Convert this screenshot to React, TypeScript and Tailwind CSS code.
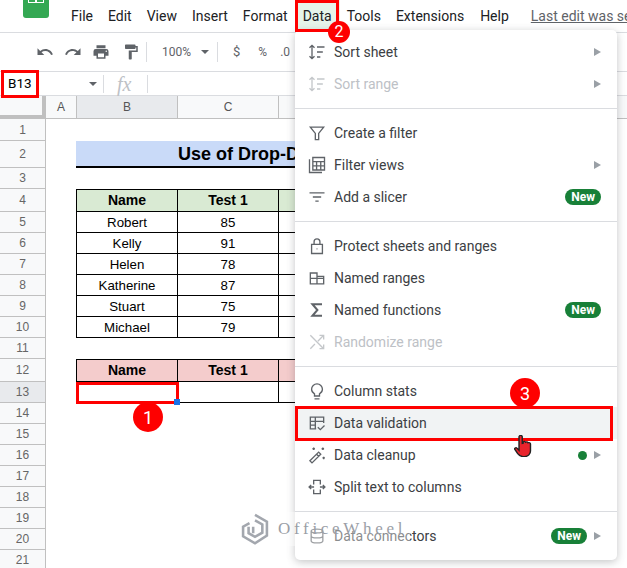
const font = "[font-family:Roboto,sans-serif]";

const rows = [
  { n: 1, h: "h-[22px]" },
  { n: 2, h: "h-[27px]" },
  { n: 3, h: "h-[21px]" },
  { n: 4, h: "h-[23px]" },
  { n: 5, h: "h-[21px]" },
  { n: 6, h: "h-[21px]" },
  { n: 7, h: "h-[21px]" },
  { n: 8, h: "h-[21px]" },
  { n: 9, h: "h-[21px]" },
  { n: 10, h: "h-[21px]" },
  { n: 11, h: "h-[21px]" },
  { n: 12, h: "h-[23px]" },
  { n: 13, h: "h-[21px]" },
  { n: 14, h: "h-[21px]" },
  { n: 15, h: "h-[21px]" },
  { n: 16, h: "h-[21px]" },
  { n: 17, h: "h-[21px]" },
  { n: 18, h: "h-[21px]" },
  { n: 19, h: "h-[21px]" },
  { n: 20, h: "h-[21px]" },
  { n: 21, h: "h-[21px]" },
];

const people: Record<number, [string, string]> = {
  5: ["Robert", "85"],
  6: ["Kelly", "91"],
  7: ["Helen", "78"],
  8: ["Katherine", "87"],
  9: ["Stuart", "75"],
  10: ["Michael", "79"],
};

function Cell({ className = "", children }: { className?: string; children?: React.ReactNode }) {
  return (
    <div className={`flex items-center justify-center border-r border-b border-black ${className}`}>
      {children}
    </div>
  );
}

function RowCells({ n }: { n: number }) {
  if (n === 2) {
    return (
      <div className="ml-[30px] flex w-[420px] items-center border-b-[2px] border-black bg-[#c9daf8] pt-[1px] pl-[102px] text-[18px] font-bold whitespace-nowrap text-black">
        Use of Drop-Down List
      </div>
    );
  }
  if (n === 4 || n === 12) {
    const bg = n === 4 ? "bg-[#d9ead3]" : "bg-[#f4cccc]";
    return (
      <div className="ml-[30px] flex border-t border-l border-black text-[14px] font-bold text-black">
        <Cell className={`w-[101px] ${bg}`}>Name</Cell>
        <Cell className={`w-[101px] ${bg}`}>Test 1</Cell>
        <Cell className={`w-[101px] ${bg}`} />
      </div>
    );
  }
  if (n === 13) {
    return (
      <div className="ml-[30px] flex border-l border-black text-[13px]">
        <Cell className="w-[101px]" />
        <Cell className="w-[101px]" />
        <Cell className="w-[101px]" />
      </div>
    );
  }
  const p = people[n];
  if (p) {
    return (
      <div className="ml-[30px] flex border-l border-black text-[13.3px] text-black">
        <Cell className="w-[101px] pt-[1px]">{p[0]}</Cell>
        <Cell className="w-[101px] pt-[1px]">{p[1]}</Cell>
        <Cell className="w-[101px]" />
      </div>
    );
  }
  return null;
}

function Sheet() {
  return (
    <div className="[font-family:'Liberation_Sans',Arial,sans-serif]">
      <div className="flex h-[23px] border-b border-[#c0c0c0] bg-white text-[12px] text-[#555]">
        <div className="w-[46px] border-r-[4px] border-b-[3px] border-[#c0c0c0] bg-[#f8f9fa]" />
        <div className="flex w-[31px] items-center justify-center border-r border-[#c0c0c0] bg-[#f8f9fa]">A</div>
        <div className="flex w-[101px] items-center justify-center border-r border-[#c0c0c0] bg-[#e8eaed]">B</div>
        <div className="flex w-[101px] items-center justify-center border-r border-[#c0c0c0] bg-[#f8f9fa]">C</div>
        <div className="flex-1 bg-[#f8f9fa]" />
      </div>
      {rows.map((r) => (
        <div key={r.n} className={`flex ${r.h}`}>
          <div
            className={`flex w-[46px] shrink-0 items-center justify-center border-r border-b border-[#c0c0c0] text-[12px] text-[#666] ${
              r.n === 13 ? "bg-[#e8eaed]" : "bg-[#f8f9fa]"
            }`}
          >
            {r.n}
          </div>
          <RowCells n={r.n} />
        </div>
      ))}
    </div>
  );
}

function Toolbar() {
  return (
    <div className="flex h-[39px] items-center border-b border-[#dadce0] pl-[36px] text-[#5f6368]">
      <svg viewBox="0 0 24 24" className="h-[18px] w-[18px]" fill="currentColor">
        <path d="M12.5 8c-2.65 0-5.05 1-6.9 2.6L2 7v9h9l-3.62-3.62A8 8 0 0 1 12.5 10.5c3.54 0 6.55 2.31 7.6 5.5l2.37-.78C21.08 11.03 17.15 8 12.5 8z" />
      </svg>
      <svg viewBox="0 0 24 24" className="ml-[10px] h-[18px] w-[18px]" fill="currentColor">
        <path d="M18.4 10.6C16.55 9 14.15 8 11.5 8c-4.65 0-8.58 3.03-9.96 7.22L3.9 16a8 8 0 0 1 7.6-5.5c1.95 0 3.73.72 5.12 1.88L13 16h9V7z" />
      </svg>
      <svg viewBox="0 0 24 24" className="ml-[10px] h-[18px] w-[18px]" fill="currentColor">
        <path d="M19 8H5a3 3 0 0 0-3 3v6h4v4h12v-4h4v-6a3 3 0 0 0-3-3zm-3 11H8v-5h8v5zm3-7a1 1 0 1 1 0-2 1 1 0 0 1 0 2zM18 3H6v4h12V3z" />
      </svg>
      <svg viewBox="0 0 24 24" className="ml-[12px] h-[18px] w-[18px]" fill="currentColor">
        <path d="M18 4V3a1 1 0 0 0-1-1H5a1 1 0 0 0-1 1v4a1 1 0 0 0 1 1h12a1 1 0 0 0 1-1V6h1v4H9v11a1 1 0 0 0 1 1h2a1 1 0 0 0 1-1v-9h8V4h-3z" />
      </svg>
      <div className="ml-[6px] h-[20px] w-px bg-[#dadce0]" />
      <span className={`ml-[15px] text-[12px] ${font}`}>100%</span>
      <span className="ml-[10px] h-0 w-0 border-x-[4px] border-t-[4px] border-x-transparent border-t-[#5f6368]" />
      <div className="ml-[8px] h-[20px] w-px bg-[#dadce0]" />
      <span className={`ml-[15px] text-[13px] ${font}`}>$</span>
      <span className={`ml-[18px] text-[12px] ${font}`}>%</span>
      <span className={`ml-[13px] text-[12px] ${font}`}>.0</span>
    </div>
  );
}

function FormulaBar() {
  return (
    <div className="flex h-[24px] items-center border-b border-[#dadce0]">
      <div className={`w-[89px] pl-[8px] text-[13.5px] text-black ${font}`}>B13</div>
      <span className="h-0 w-0 border-x-[4px] border-t-[4px] border-x-transparent border-t-[#5f6368]" />
      <div className="ml-[6px] h-[18px] w-px bg-[#dadce0]" />
      <span className="ml-[13px] w-[20px] [font-family:'Liberation_Serif',serif] text-[20px] leading-[20px] text-[#bdc1c6] italic">
        fx
      </span>
      <div className="ml-[10px] h-[18px] w-px bg-[#dadce0]" />
    </div>
  );
}

function MenuBar() {
  return (
    <div className="flex h-[33px] border-b border-[#dadce0]">
      <div className="relative w-[71px] shrink-0">
        <div className="absolute top-[-14px] left-[23px] flex h-[32px] w-[26px] items-center justify-center rounded-[3px] bg-[#34a853]">
          <div className="mt-[-10px] grid h-[11px] w-[16px] grid-cols-2 gap-[1.5px] border-[1.5px] border-white bg-white">
            <span className="bg-[#34a853]" />
            <span className="bg-[#34a853]" />
            <span className="bg-[#34a853]" />
            <span className="bg-[#34a853]" />
          </div>
        </div>
      </div>
      <div className={`flex pt-[7px] text-[14px] leading-[18px] text-[#202124] ${font}`}>
        <span>File</span>
        <span className="ml-[15px]">Edit</span>
        <span className="ml-[15px]">View</span>
        <span className="ml-[15px]">Insert</span>
        <span className="ml-[15px]">Format</span>
        <span className="mt-[-7px] ml-[7px] h-[32px] w-[45px] bg-[#e6f4ea] pt-[7px] pl-[8px]">Data</span>
        <span className="ml-[7px]">Tools</span>
        <span className="ml-[15px]">Extensions</span>
        <span className="ml-[16px]">Help</span>
        <span className="ml-[22px] whitespace-nowrap text-[#5f6368] underline">Last edit was seconds ago</span>
      </div>
    </div>
  );
}

const Arrow = () => <span className="h-0 w-0 border-y-[4px] border-l-[7px] border-y-transparent border-l-[#9aa0a6]" />;

const New = () => (
  <span className="rounded-full bg-[#188038] px-[6px] text-[12px] leading-[16px] font-bold text-white">New</span>
);

const stroke = { fill: "none", stroke: "currentColor", strokeWidth: 1.6 };

const icons: Record<string, React.ReactNode> = {
  sort: <path {...stroke} d="M6 4v16M3 7l3-3 3 3M3 17l3 3 3-3M12 6h9M12 12h7M12 18h4" />,
  filter: <path {...stroke} d="M4 5h16l-6 7.5V20h-4v-7.5z" />,
  views: <path {...stroke} d="M3 5v16h15M7 3h14v15H7zM7 8h14M11.5 8v10M16.5 8v10M7 13h14" />,
  slicer: <path {...stroke} d="M3 7h18M7 12h10M10 17h4" />,
  lock: <path {...stroke} d="M5.5 10h13v11h-13zM8.5 10V7a3.5 3.5 0 0 1 7 0v3M11.5 15.500h1" />,
  ranges: <path {...stroke} d="M4 6h8v13H4zM12 10h8v9h-8zM4 12.500h16M12 6v13" />,
  sigma: <path {...stroke} strokeWidth={2.4} d="M18 5H6.500l6 7-6 7H18" />,
  random: <path {...stroke} d="M4 4l16 16M15 4h5v5M20 4L13 11M9.500 14.500L4 20M15 20h5v-5" />,
  bulb: <path {...stroke} d="M9 21.500h6M9 18h6v-2.500c2-1.200 3.500-3 3.500-5.500a6.500 6.500 0 0 0-13 0c0 2.500 1.500 4.300 3.500 5.500z" />,
  validate: <path {...stroke} d="M11 19H4V5h16v7M4 10h16M10 5v14M4 14.500h6M13 17l3 3 5-5" />,
  wand: <path {...stroke} d="M3.500 19L14 8.500l2.500 2.500L6 21.500zM11.500 11l2.500 2.500M8 3v3M6.500 4.500h3M19 3l0 3M17.500 4.500h3M20 14v3M18.500 15.500h3" />,
  split: <path {...stroke} d="M8 8V4h8v4M8 16v4h8v-4M8 8v1M16 8v1M8 15v1M16 15v1M2.500 12h6M15.500 12h6M5 9.500L2.500 12 5 14.500M19 9.500l2.500 2.500-2.500 2.500" />,
  db: <path {...stroke} d="M5 6c0-3 14-3 14 0v12c0 3-14 3-14 0zM5 6c0 3 14 3 14 0M5 12c0 3 14 3 14 0" />,
};

function Item({
  icon,
  label,
  off,
  right,
  y,
}: {
  icon: string;
  label: string;
  off?: boolean;
  right?: React.ReactNode;
  y?: string;
}) {
  return (
    <div className={`flex h-[32px] items-center pr-[16px] pl-[12px] ${y ?? ""} ${off ? "text-[#bdc1c6]" : "text-[#3c4043]"}`}>
      <svg viewBox="0 0 24 24" className={`h-[20px] w-[20px] ${off ? "text-[#c4c7ca]" : "text-[#5f6368]"}`}>
        {icons[icon]}
      </svg>
      <span className="ml-[7px] text-[14px]">{label}</span>
      <span className="ml-auto flex items-center gap-[7px]">{right}</span>
    </div>
  );
}

const Sep = () => <div className="my-[8px] h-px bg-[#dadce0]" />;

function Menu() {
  return (
    <div
      className={`absolute top-[30px] left-[295px] w-[322px] rounded-[5px] bg-white pt-[6px] pb-[8px] shadow-[0_2px_8px_rgba(60,64,67,0.3)] ${font}`}
    >
      <Item icon="sort" label="Sort sheet" right={<Arrow />} />
      <Item icon="sort" label="Sort range" off right={<Arrow />} />
      <Sep />
      <Item icon="filter" label="Create a filter" />
      <Item icon="views" label="Filter views" right={<Arrow />} />
      <Item icon="slicer" label="Add a slicer" right={<New />} />
      <Sep />
      <Item icon="lock" label="Protect sheets and ranges" />
      <Item icon="ranges" label="Named ranges" />
      <Item icon="sigma" label="Named functions" right={<New />} />
      <Item icon="random" label="Randomize range" off />
      <Sep />
      <Item icon="bulb" label="Column stats" />
      <Item icon="validate" label="Data validation" y="bg-[#f1f3f4]" />
      <Item
        icon="wand"
        label="Data cleanup"
        right={
          <>
            <span className="h-[9px] w-[9px] rounded-full bg-[#188038]" />
            <Arrow />
          </>
        }
      />
      <Item icon="split" label="Split text to columns" />
      <Sep />
      <Item
        icon="db"
        label="Data connectors"
        right={
          <>
            <New />
            <Arrow />
          </>
        }
      />
    </div>
  );
}

function Step({ n, className }: { n: number; className: string }) {
  return (
    <div
      className={`absolute flex items-center justify-center rounded-full bg-[#fe0000] text-white ${font} ${className}`}
    >
      {n}
    </div>
  );
}

function Hand() {
  return (
    <svg
      viewBox="1 2 19 26"
      preserveAspectRatio="none"
      className="absolute top-[435px] left-[514px] h-[22px] w-[18px]"
    >
      <path
        d="M8 2.500c1 0 1.700.7 1.700 1.700V12l1-.2V10c1-.8 2.200-.4 2.500.5 1-.8 2.300-.3 2.600.7 1.200-.6 2.600 0 2.600 1.400V21c0 3.500-2.500 6.500-6 6.500h-2c-2.500 0-4-1.500-5.500-3.500l-3-5c-.7-1.300 1-2.700 2.200-1.500L6.300 20V4.200C6.300 3.200 7 2.500 8 2.500z"
        fill="#e8242c"
        stroke="#222"
        strokeWidth="1.500"
      />
    </svg>
  );
}

function Watermark() {
  return (
    <div className="pointer-events-none absolute top-[512px] left-[240px] flex h-[34px] items-center bg-white/40 pr-[4px]">
      <svg viewBox="0 0 32 36" className="h-[33px] w-[30px] text-[#a3a7ae]" fill="none" stroke="currentColor" strokeWidth="2.800">
        <path d="M16 2l13 7.500v15L16 33 3 25.500V15l7-4M16 8l8 4.500v9L16 26l-7-4v-7M14 15v7" />
      </svg>
      <span className="ml-[8px] [font-family:'Liberation_Serif',serif] text-[17px] tracking-[3.7px] text-[#9a9ea6]">
        OfficeWheel
      </span>
    </div>
  );
}

export default function App() {
  return (
    <div className="relative h-[568px] w-[627px] overflow-hidden bg-white">
      <MenuBar />
      <Toolbar />
      <FormulaBar />
      <Sheet />

      <Menu />

      {/* red callout boxes */}
      <div className="absolute top-[0px] left-[295px] h-[32px] w-[44px] border-[3px] border-[#fe0000]" />
      <div className="absolute top-[70px] left-[1px] h-[28px] w-[38px] border-[3px] border-[#fe0000]" />
      <div className="absolute top-[382px] left-[76px] h-[22px] w-[103px] border-[3px] border-[#fe0000]" />
      <div className="absolute top-[406px] left-[295px] h-[35px] w-[318px] border-[3px] border-[#fe0000]" />

      {/* selected cell handle */}
      <div className="absolute top-[399px] left-[174px] h-[6px] w-[6px] bg-[#1a73e8]" />

      <Step n={1} className="top-[402px] left-[133px] h-[30px] w-[30px] text-[18px]" />
      <Step n={2} className="top-[21px] left-[328px] h-[22px] w-[22px] text-[16px]" />
      <Step n={3} className="top-[378px] left-[510px] h-[30px] w-[30px] text-[18px]" />
      <Hand />
      <Watermark />
    </div>
  );
}
